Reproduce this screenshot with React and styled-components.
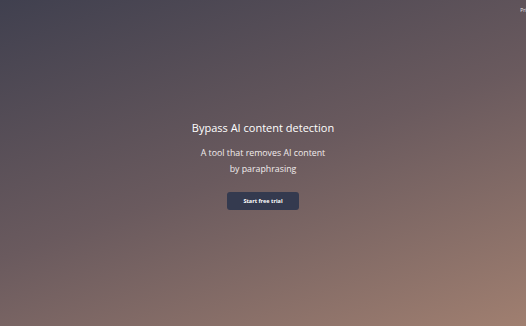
import React from 'react';
import styled, { createGlobalStyle } from 'styled-components';

const GlobalStyle = createGlobalStyle`
  html, body { margin: 0; padding: 0; }
  body { font-family: "Open Sans", "Noto Sans", sans-serif; }
`;

const Page = styled.div`
  width: 526px;
  height: 326px;
  overflow: hidden;
  background: linear-gradient(160deg, #40404f 0%, #6a5a5e 50%, #a07f70 100%);
  display: flex;
  flex-direction: column;
`;

const Header = styled.header`
  height: 24px;
  display: flex;
  justify-content: flex-end;
  align-items: flex-start;
  overflow: hidden;
`;

const NavLink = styled.a`
  font-size: 5px;
  color: #e8e4e8;
  margin-top: 7px;
  margin-right: -10px;
  text-decoration: none;
`;

const Hero = styled.main`
  flex: 1;
  display: flex;
  flex-direction: column;
  align-items: center;
  padding-top: 96px;
`;

const Title = styled.h1`
  margin: 0;
  font-size: 11px;
  font-weight: 500;
  color: #ffffff;
`;

const Subtitle = styled.p`
  margin: 10px 0 0;
  font-size: 8.8px;
  line-height: 16px;
  color: #f1ecec;
  text-align: center;
`;

const Button = styled.button`
  margin-top: 15px;
  width: 72px;
  height: 18px;
  border: none;
  border-radius: 3px;
  background: #343a4f;
  color: #ffffff;
  font-family: inherit;
  font-size: 5.5px;
  font-weight: 700;
`;

export default function App() {
  return (
    <>
      <GlobalStyle />
      <Page>
        <Header>
          <NavLink href="#">Pricing</NavLink>
        </Header>
        <Hero>
          <Title>Bypass AI content detection</Title>
          <Subtitle>
            A tool that removes AI content
            <br />
            by paraphrasing
          </Subtitle>
          <Button>Start free trial</Button>
        </Hero>
      </Page>
    </>
  );
}
